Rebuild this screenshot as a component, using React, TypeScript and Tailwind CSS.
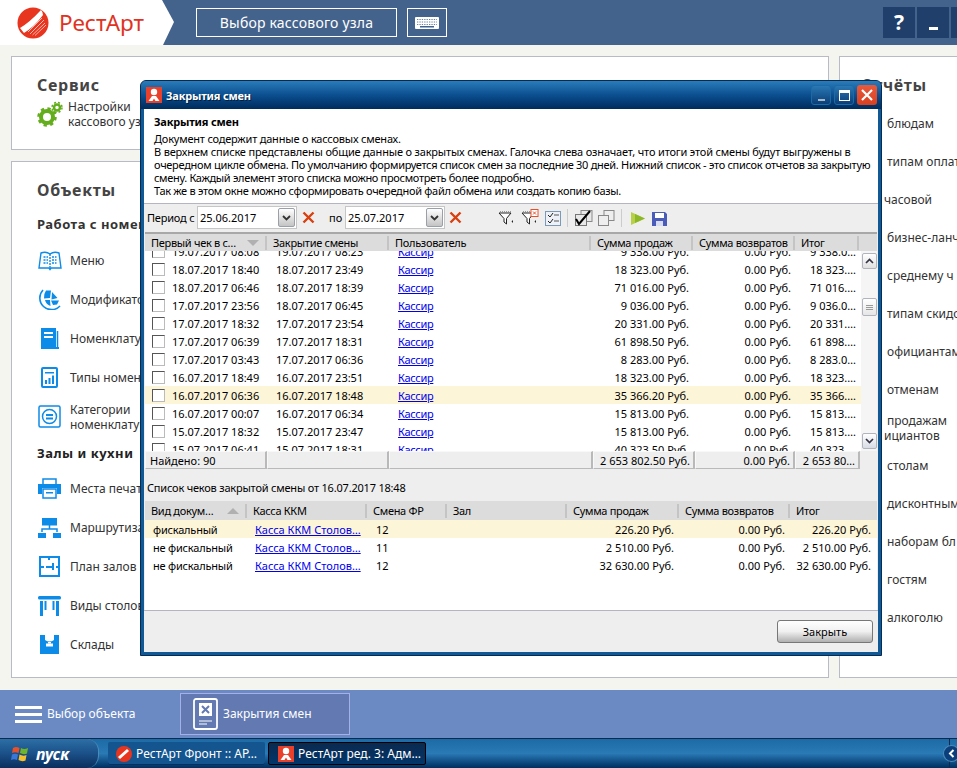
import React from "react";

const sans = "font-['Liberation_Sans',Arial,sans-serif]";
const win = "font-['Noto_Sans','DejaVu_Sans',sans-serif]";

const Logo = () => (
  <svg width="32" height="32" viewBox="0 0 32 32">
    <circle cx="16" cy="16" r="15.5" fill="#e8351f" />
    <path d="M3 21 Q13 15 24 3 Q26 5 26 8 Q17 20 7 26 Z" fill="#fff" />
    <path d="M13 27 L27 13 M15.500 28 L28 16 M18 28.500 L29 18 M11 25 L25 11" stroke="#f7b7ad" strokeWidth="1" />
  </svg>
);
const TitleIcon = ({ s = 16 }: { s?: number }) => (
  <svg width={s} height={s} viewBox="0 0 16 16" className="shrink-0">
    <rect width="16" height="16" fill="#e8402a" />
    <circle cx="8" cy="5" r="3.200" fill="#fff" />
    <path d="M2.500 14 L6 9 H10 L13.500 14 H9.500 L8 11.500 L6.500 14 Z" fill="#fff" />
  </svg>
);
const Gears = () => (
  <svg width="26" height="26" viewBox="0 0 26 26">
    <circle cx="10" cy="16" r="6" fill="none" stroke="#64ad1c" strokeWidth="4" />
    <circle cx="10" cy="16" r="8.500" fill="none" stroke="#64ad1c" strokeWidth="2.500" strokeDasharray="3.300 3.400" />
    <circle cx="20" cy="6.500" r="3" fill="none" stroke="#64ad1c" strokeWidth="2.500" />
    <circle cx="20" cy="6.500" r="5" fill="none" stroke="#64ad1c" strokeWidth="1.500" strokeDasharray="2 2" />
  </svg>
);

const B = "#0c8be8";
const icons: Record<string, React.ReactNode> = {
  menu: (
    <svg width="24" height="20" viewBox="0 0 24 20" fill="none" stroke={B} strokeWidth="1.400">
      <path d="M1 17 L3 2 Q8 0 12 3 Q16 0 21 2 L23 17 H13 L12 18.500 L11 17 Z" />
      <path d="M12 3 V17 M5.500 6 H10 M5.500 9 H10 M5.500 12 H10 M14 6 H18.500 M14 9 H18.500 M14 12 H18.500" strokeDasharray="2 1" />
    </svg>
  ),
  mod: (
    <svg width="22" height="21" viewBox="0 0 22 21" fill="none">
      <path d="M4 1 A10 10 0 0 0 21 17" stroke={B} strokeWidth="1.600" />
      <path d="M7 1.500 L12 1.500 L11 9 L5 9.500 Q4.500 5 7 1.500 Z M13 3 L18.500 9 L12.500 10.500 Z M12 11.500 H20 L18 15.500 L14 16 Z M6 11 L11 11 L11.500 17 Q7 15.500 6 11 Z" fill={B} />
    </svg>
  ),
  nom: (
    <svg width="18" height="21" viewBox="0 0 18 21">
      <rect x="0" y="0" width="15" height="19" fill={B} />
      <path d="M16.500 3 V20 H1" fill="none" stroke={B} strokeWidth="1.500" />
      <path d="M3 4 H12 V6 H3 Z M3 8 H12 V10 H3 Z" fill="#fff" />
      <rect x="0" y="19" width="18" height="2" fill={B} />
    </svg>
  ),
  types: (
    <svg width="17" height="21" viewBox="0 0 17 21" fill="none">
      <rect x="1" y="1" width="15" height="19" rx="1" stroke={B} strokeWidth="2" />
      <path d="M4 5 H13 V6.500 H4 Z M4 13 H6 V17 H4 Z M7.500 11 H9.500 V17 H7.500 Z M11 8.500 H13 V17 H11 Z" fill={B} />
    </svg>
  ),
  cat: (
    <svg width="23" height="23" viewBox="0 0 23 23" fill="none">
      <rect x="1" y="1" width="21" height="21" rx="1.500" stroke={B} strokeWidth="1.500" />
      <circle cx="11.500" cy="11.500" r="7" stroke={B} strokeWidth="1.500" />
      <path d="M8 9 H15 V11 H8 Z M8 12.500 H15 V14.500 H8 Z" fill={B} />
    </svg>
  ),
  print: (
    <svg width="23" height="21" viewBox="0 0 23 21">
      <path d="M5 6 V1 H18 V6" fill="none" stroke={B} strokeWidth="1.500" />
      <path d="M0 6 H23 V16 H19 V10 H4 V16 H0 Z" fill={B} />
      <rect x="5" y="11" width="13" height="9" fill="#fff" stroke={B} strokeWidth="1.500" />
      <rect x="8" y="14" width="7" height="1.500" fill={B} />
    </svg>
  ),
  route: (
    <svg width="23" height="20" viewBox="0 0 23 20">
      <rect x="4" y="0" width="15" height="7.500" fill={B} />
      <path d="M11.500 7 V11 M4 14 V11 H19 V14" fill="none" stroke={B} strokeWidth="1.500" />
      <rect x="0" y="15" width="8" height="5" fill={B} />
      <rect x="15" y="15" width="8" height="5" fill={B} />
    </svg>
  ),
  plan: (
    <svg width="21" height="21" viewBox="0 0 21 21" fill="none" stroke={B} strokeWidth="2">
      <path d="M1 1 H20 V20 H1 Z" />
      <path d="M1 11 H5 M7 11 H14 V7 M14 11 V14 M20 11 H17 M10 1 V4" />
    </svg>
  ),
  tables: (
    <svg width="23" height="20" viewBox="0 0 23 20">
      <rect x="0" y="0" width="23" height="3.500" rx="1.500" fill={B} />
      <rect x="2" y="5" width="3" height="15" fill={B} />
      <rect x="6.500" y="5" width="2" height="9" fill={B} />
      <rect x="14.500" y="5" width="2" height="9" fill={B} />
      <rect x="18" y="5" width="3" height="15" fill={B} />
    </svg>
  ),
  store: (
    <svg width="19" height="19" viewBox="0 0 19 19">
      <path d="M0 0 H5 V5 Q9.500 8 14 5 V0 H19 V19 H0 Z" fill={B} />
      <rect x="6" y="8.500" width="7" height="3" fill="#fff" />
      <rect x="8" y="7" width="3" height="1.500" fill="#fff" />
    </svg>
  ),
};

const SecTitle = ({ children, cls }: { children: React.ReactNode; cls: string }) => (
  <div className={`text-[13px] font-bold tracking-[0.5px] ${cls}`}>{children}</div>
);
const Item = ({ icon, label, label2 }: { icon: string; label: string; label2?: string }) => (
  <div className="flex h-[39px] items-center">
    <div className="flex w-[33px] shrink-0 justify-center pr-[8px]">{icons[icon]}</div>
    <div className="whitespace-nowrap text-[12px] leading-[15px] text-[#333]">
      {label}
      {label2 && <br />}
      {label2}
    </div>
  </div>
);

const rightItems = ["блюдам", "типам оплат", "часовой", "бизнес-ланч", "среднему ч", "типам скидо", "официантам", "отменам"];
const rightItems2 = ["столам", "дисконтным", "наборам бл", "гостям", "алкоголю"];

const rows = [
  ["19.07.2017 08:08", "19.07.2017 08:23", "9 338.00 Руб.", "9 338.0…"],
  ["18.07.2017 18:40", "18.07.2017 23:49", "18 323.00 Руб.", "18 323.…"],
  ["18.07.2017 06:46", "18.07.2017 18:39", "71 016.00 Руб.", "71 016.…"],
  ["17.07.2017 23:56", "18.07.2017 06:45", "9 036.00 Руб.", "9 036.0…"],
  ["17.07.2017 18:32", "17.07.2017 23:54", "20 331.00 Руб.", "20 331.…"],
  ["17.07.2017 06:39", "17.07.2017 18:31", "61 898.50 Руб.", "61 898.…"],
  ["17.07.2017 03:43", "17.07.2017 06:36", "8 283.00 Руб.", "8 283.0…"],
  ["16.07.2017 18:49", "16.07.2017 23:51", "18 323.00 Руб.", "18 323.…"],
  ["16.07.2017 06:36", "16.07.2017 18:48", "35 366.20 Руб.", "35 366.…"],
  ["16.07.2017 00:07", "16.07.2017 06:34", "15 813.00 Руб.", "15 813.…"],
  ["15.07.2017 18:32", "15.07.2017 23:47", "15 813.00 Руб.", "15 813.…"],
  ["15.07.2017 06:41", "15.07.2017 18:31", "40 323.50 Руб.", "40 323.…"],
];
const rows2 = [
  ["фискальный", "12", "226.20 Руб.", "226.20 Руб."],
  ["не фискальный", "11", "2 510.00 Руб.", "2 510.00 Руб."],
  ["не фискальный", "12", "32 630.00 Руб.", "32 630.00 Руб."],
];

const Head = ({ w, children, arrow, down }: { w: string; children?: React.ReactNode; arrow?: boolean; down?: boolean }) => (
  <div className={`flex h-[14px] items-center justify-between border-r-2 border-[#c4c4c4] pl-[6px] pr-[6px] ${w}`}>
    <span className="whitespace-nowrap">{children}</span>
    {arrow && (
      <svg width="12" height="6" viewBox="0 0 12 6">
        <path d={down ? "M0 0 H12 L6 6 Z" : "M0 6 H12 L6 0 Z"} fill="#b0b0b0" />
      </svg>
    )}
  </div>
);

const DateBox = ({ v }: { v: string }) => (
  <div className="flex h-[23px] w-[100px] items-center justify-between border border-[#c6c6c6] bg-white pl-[2px] pr-[1px]">
    <span className="text-[11px]">{v}</span>
    <div className="flex h-[19px] w-[17px] items-center justify-center rounded-[2px] border border-[#9aa0a8] bg-gradient-to-b from-[#ffffff] to-[#c4c4c4]">
      <svg width="9" height="6" viewBox="0 0 9 6">
        <path d="M1 1 L4.500 4.500 L8 1" fill="none" stroke="#333" strokeWidth="1.800" />
      </svg>
    </div>
  </div>
);
const RedX = ({ cls }: { cls: string }) => (
  <svg width="13" height="13" viewBox="0 0 13 13" className={cls}>
    <path d="M1.500 1.500 L11.500 11.500 M11.500 1.500 L1.500 11.500" stroke="#d8400f" strokeWidth="2.400" />
  </svg>
);
const Funnel = () => (
  <g>
    <path d="M0 2 H12 L7.500 7.500 V13 L5 11 V7.500 Z" fill="#fff" stroke="#222" strokeWidth="1" />
    <path d="M1 0.500 H12" stroke="#999" strokeDasharray="1 1" />
    <path d="M14 9 L12.500 10.500 L14 12 Z" fill="#222" />
  </g>
);

const Sunken = ({ w, children }: { w: string; children?: React.ReactNode }) => (
  <div className={`flex h-[18px] items-center justify-end whitespace-nowrap border-y border-r-2 border-l border-[#b9b9b9] border-l-[#f8f8f8] border-t-[#f8f8f8] pr-[3px] ${w}`}>
    {children}
  </div>
);

const Check = () => <div className="ml-[7px] h-[13px] w-[13px] shrink-0 border border-[#555] border-r-[#bbb] border-b-[#bbb] bg-white" />;

export default function App() {
  return (
    <div className={`relative flex h-[768px] w-[957px] flex-col overflow-hidden bg-[#f5f5ef] ${sans}`}>
      {/* шапка */}
      <header className="flex h-[45px] shrink-0 items-center bg-[#44638c]">
        <div className="flex h-full w-[174px] shrink-0 items-center gap-[10px] bg-white pl-[17px] [clip-path:polygon(0_0,162px_0,174px_22px,163px_45px,0_45px)]">
          <Logo />
          <span className="text-[22.500px] text-[#e0321e]">РестАрт</span>
        </div>
        <div className="ml-[22px] flex h-[29px] w-[201px] items-center justify-center border border-white text-[14px] tracking-[0.2px] text-white">
          Выбор кассового узла
        </div>
        <div className="ml-[10px] flex h-[29px] w-[40px] items-center justify-center border border-white">
          <svg width="24" height="12" viewBox="0 0 24 12">
            <rect width="24" height="12" rx="1" fill="#fff" />
            <path d="M2 2.500 H22 M2 5 H22 M2 7.500 H22" stroke="#44638c" strokeWidth="0.800" strokeDasharray="1.300 1.100" />
            <rect x="5" y="9" width="14" height="1.500" fill="#44638c" />
          </svg>
        </div>
        <div className="ml-auto flex gap-[2px]">
          <div className="flex h-[31px] w-[32px] items-center justify-center bg-[#203f6b] text-[21px] font-bold text-white">?</div>
          <div className="flex h-[31px] w-[32px] items-end justify-center bg-[#203f6b] pb-[8px]">
            <div className="h-[3px] w-[9px] bg-white" />
          </div>
          <div className="h-[31px] w-[6px] bg-[#203f6b]" />
        </div>
      </header>

      {/* рабочая область */}
      <main className="flex min-h-0 flex-1 gap-[10px] pb-[12px] pl-[11px] pt-[11px]">
        <div className="flex w-[818px] shrink-0 flex-col gap-[11px]">
          <section className="h-[94px] border border-[#b8bac8] bg-white pl-[25px] pt-[19px]">
            <div className="text-[16px] font-bold leading-[18px] tracking-[0.7px] text-[#444]">Сервис</div>
            <div className="mt-[5px] flex items-center gap-[5px]">
              <Gears />
              <div className="whitespace-nowrap text-[12px] leading-[15px] text-[#333]">
                Настройки
                <br />
                кассового узла
              </div>
            </div>
          </section>
          <section className="flex-1 border border-[#b8bac8] bg-white pl-[25px] pt-[19px]">
            <div className="text-[16px] font-bold leading-[18px] tracking-[0.7px] text-[#444]">Объекты</div>
            <SecTitle cls="mt-[18px] leading-[15px] text-[#333]">Работа с номенклатурой</SecTitle>
            <div className="mt-[9px]">
              <Item icon="menu" label="Меню" />
              <Item icon="mod" label="Модификаторы" />
              <Item icon="nom" label="Номенклатура" />
              <Item icon="types" label="Типы номенклатуры" />
              <Item icon="cat" label="Категории" label2="номенклатуры" />
            </div>
            <SecTitle cls="mt-[10px] leading-[15px] text-[#222]">Залы и кухни</SecTitle>
            <div className="mt-[8px]">
              <Item icon="print" label="Места печати" />
              <Item icon="route" label="Маршрутизация" />
              <Item icon="plan" label="План залов" />
              <Item icon="tables" label="Виды столов" />
              <Item icon="store" label="Склады" />
            </div>
          </section>
        </div>
        <section className="min-w-0 flex-1 overflow-hidden border border-r-0 border-[#b8bac8] bg-white pt-[19px]">
          <div className="pl-[21px] text-[16px] font-bold leading-[18px] tracking-[0.7px] text-[#444]">Отчёты</div>
          <div className="mt-[11px] pl-[47px] text-[12px] text-[#333]">
            {rightItems.map((t) => (
              <div key={t} className={`flex h-[38px] items-center whitespace-nowrap ${t === "часовой" ? "-ml-[3px]" : ""}`}>
                {t}
              </div>
            ))}
            <div className="flex h-[38px] flex-col justify-center whitespace-nowrap leading-[15px]">
              <span>продажам</span>
              <span className="-ml-[3px]">ициантов</span>
            </div>
            {rightItems2.map((t) => (
              <div key={t} className="flex h-[38px] items-center whitespace-nowrap">
                {t}
              </div>
            ))}
          </div>
        </section>
      </main>

      {/* панель открытых окон */}
      <div className="flex h-[48px] shrink-0 items-center bg-[#6b8ac4] text-white">
        <div className="ml-[15px] flex w-[27px] flex-col gap-[4px]">
          <div className="h-[3px] bg-white" />
          <div className="h-[3px] bg-white" />
          <div className="h-[3px] bg-white" />
        </div>
        <span className="ml-[5px] w-[88px] whitespace-nowrap text-[12px]">Выбор объекта</span>
        <div className="ml-[45px] flex h-[42px] w-[170px] items-center border border-[#a5b0ea] bg-[#6279b2] pl-[12px]">
          <svg width="25" height="32" viewBox="0 0 25 32">
            <rect x="1" y="1" width="23" height="30" rx="2" fill="none" stroke="#fff" strokeWidth="1.800" />
            <rect x="6" y="5" width="13" height="13" fill="#fff" />
            <path d="M9 8 L16 15 M16 8 L9 15" stroke="#6279b2" strokeWidth="2" />
            <path d="M6 23 H19 M6 26 H14" stroke="#fff" strokeWidth="1" />
          </svg>
          <span className="ml-[5px] whitespace-nowrap text-[12px]">Закрытия смен</span>
        </div>
      </div>

      {/* панель задач */}
      <footer className={`flex h-[30px] shrink-0 items-center border-t border-[#0c2a4e] bg-gradient-to-b from-[#1c6aa6] via-[#2a7ab6] to-[#002f60] text-[12px] text-white ${win}`}>
        <div className="flex h-full w-[99px] items-center rounded-r-[12px] border-r border-[#4c8ab8] bg-gradient-to-b from-[#2b6fa6] via-[#1b5088] to-[#0a2f5e] pl-[11px]">
          <svg width="19" height="18" viewBox="0 0 19 18">
            <path d="M2 3 Q5 1 8.500 3 L7.500 8 Q4 6.500 1 8 Z" fill="#e8502a" />
            <path d="M10 3 Q13 5 17 3 L16 8.500 Q12.500 10 9 8 Z" fill="#6fb52c" />
            <path d="M1 9.500 Q4 8 7 9.500 L6 15 Q3 13.500 0 15 Z" fill="#3a78d8" />
            <path d="M8.500 9.500 Q12 11.500 15.500 10 L14.500 15.500 Q11 17 7.500 15 Z" fill="#f4c02c" />
          </svg>
          <span className={`ml-[6px] text-[16px] font-bold italic ${sans}`}>пуск</span>
        </div>
        <div className="ml-[9px] flex h-[23px] w-[157px] items-center gap-[4px] rounded-[2px] bg-[#14558f] pl-[8px] shadow-[inset_0_-1px_0_#0a2f5e]">
          <svg width="16" height="16" viewBox="0 0 16 16" className="shrink-0">
            <circle cx="8" cy="8" r="8" fill="#e8351f" />
            <path d="M2 11 L11 3 L13 5 L4 13 Z" fill="#fff" />
          </svg>
          <span className="whitespace-nowrap">РестАрт Фронт :: АР…</span>
        </div>
        <div className="ml-[3px] flex h-[23px] w-[158px] items-center gap-[4px] rounded-[2px] border border-black bg-gradient-to-b from-[#0a2a50] to-[#02356a] pl-[9px]">
          <TitleIcon />
          <span className="whitespace-nowrap">РестАрт ред. 3: Адм…</span>
        </div>
        <div className="ml-auto flex h-full w-[8px] items-center border-l border-[#0c2a4e]">
          <div className="-ml-[6px] flex h-[15px] w-[15px] shrink-0 items-center justify-center rounded-full bg-[#0a3f7c] ring-1 ring-[#4c8ab8]">
            <svg width="7" height="9" viewBox="0 0 7 9">
              <path d="M5.500 1 L2 4.500 L5.500 8" fill="none" stroke="#fff" strokeWidth="2" />
            </svg>
          </div>
        </div>
      </footer>

      {/* окно поверх страницы */}
      <div className={`absolute left-[140px] top-[80px] flex h-[576px] w-[742px] flex-col rounded-t-[6px] border border-[#0a2a50] bg-[#0f5a96] px-[3px] pb-[3px] text-[11px] leading-[13px] text-black ${win}`}>
        <div className="-mx-[3px] flex h-[28px] shrink-0 items-center rounded-t-[5px] bg-gradient-to-b from-[#2a7cba] via-[#0c4f90] to-[#002c5c] pl-[5px] pr-[4px]">
          <TitleIcon />
          <span className="ml-[4px] text-[11px] font-bold tracking-[-0.2px] text-white [text-shadow:1px_1px_0_#002040]">Закрытия смен</span>
          <div className="ml-auto flex gap-[3px]">
            <div className="flex h-[20px] w-[20px] items-end justify-center rounded-[3px] border border-[#1c6aa6] bg-gradient-to-b from-[#2a78b4] to-[#0a3f78] pb-[3px]">
              <div className="h-[2px] w-[7px] bg-[#a8b8c8]" />
            </div>
            <div className="flex h-[20px] w-[20px] items-center justify-center rounded-[3px] border border-[#1c6aa6] bg-gradient-to-b from-[#2a78b4] to-[#0a3f78]">
              <div className="h-[11px] w-[11px] border border-t-[3px] border-white" />
            </div>
            <div className="flex h-[20px] w-[20px] items-center justify-center rounded-[3px] bg-gradient-to-b from-[#e8593c] to-[#d8401f]">
              <svg width="12" height="12" viewBox="0 0 12 12">
                <path d="M1 1 L11 11 M11 1 L1 11" stroke="#fff" strokeWidth="2.200" />
              </svg>
            </div>
          </div>
        </div>

        <div className="flex min-h-0 flex-1 flex-col bg-[#eeeeee]">
          {/* описание */}
          <div className="h-[95px] shrink-0 whitespace-nowrap border-b border-[#b4b4c4] bg-white pl-[10px] pt-[6px] tracking-[-0.2px]">
            <div className="font-bold">Закрытия смен</div>
            <div className="mt-[4px]">Документ содержит данные о кассовых сменах.</div>
            <div className="tracking-[-0.175px]">В верхнем списке представлены общие данные о закрытых сменах. Галочка слева означает, что итоги этой смены будут выгружены в</div>
            <div className="tracking-[-0.29px]">очередном цикле обмена. По умолчанию формируется список смен за последние 30 дней. Нижний список - это список отчетов за закрытую</div>
            <div className="tracking-[-0.32px]">смену. Каждый элемент этого списка можно просмотреть более подробно.</div>
            <div className="tracking-[-0.3px]">Так же в этом окне можно сформировать очередной файл обмена или создать копию базы.</div>
          </div>

          {/* панель инструментов */}
          <div className="flex h-[27px] shrink-0 items-center pl-[3px]">
            <span className="w-[50px] whitespace-nowrap tracking-[-0.2px]">Период с</span>
            <DateBox v="25.06.2017" />
            <RedX cls="ml-[5px]" />
            <span className="ml-[14px] w-[16px]">по</span>
            <DateBox v="25.07.2017" />
            <RedX cls="ml-[4px]" />
            <svg width="172" height="18" viewBox="0 0 172 18" className="ml-[36px]">
              <g transform="translate(1,2)"><Funnel /></g>
              <g transform="translate(24,2)"><Funnel /></g>
              <rect x="33" y="0.500" width="7" height="7" fill="#fff" stroke="#e8502a" />
              <path d="M35 2.500 L38 5.500 M38 2.500 L35 5.500" stroke="#e8502a" />
              <rect x="47.500" y="2.500" width="15" height="14" fill="#eef2f8" stroke="#7c9ab8" />
              <path d="M50 6 L52 8 L55 4 M50 12 L52 14 L55 10" fill="none" stroke="#222" />
              <path d="M56 6 H61 M56 12 H61" stroke="#555" />
              <path d="M69.500 0 V18" stroke="#ccc" />
              <rect x="83" y="1.500" width="11" height="11" fill="#e8e8e8" stroke="#888" />
              <rect x="77.500" y="5.500" width="11" height="11" fill="#e8e8e8" stroke="#777" />
              <path d="M78 10 L81 15 L92 2" fill="none" stroke="#000" strokeWidth="2" />
              <rect x="106" y="1.500" width="10" height="10" fill="#eee" stroke="#888" />
              <rect x="100.500" y="6.500" width="10" height="10" fill="#eee" stroke="#888" />
              <path d="M123.500 0 V18" stroke="#ccc" />
              <path d="M133 3 L147 9.500 L133 16 Z" fill="#b8d048" />
              <path d="M137 5 L147 9.500 L137 14 Z" fill="#8cb828" />
              <path d="M154 3 H167 L169 5 V17 H154 Z" fill="#4a5cb8" />
              <rect x="157" y="4" width="9" height="5" fill="#fff" />
              <rect x="158" y="12" width="7" height="5" fill="#d8dcf0" />
            </svg>
          </div>

          {/* верхний список */}
          <div className="mx-[1px] mt-[1px] flex h-[19px] shrink-0 items-center border-t-2 border-[#a8a8a8] bg-[#dcdcdc] tracking-[-0.3px]">
            <Head w="w-[122px]" arrow down>Первый чек в с…</Head>
            <Head w="w-[122px]">Закрытие смены</Head>
            <Head w="w-[202px]">Пользователь</Head>
            <Head w="w-[102px]">Сумма продаж</Head>
            <Head w="w-[102px]">Сумма возвратов</Head>
            <Head w="w-[64px]">Итог</Head>
          </div>
          <div className="mx-[1px] flex h-[200px] shrink-0 overflow-hidden bg-white">
            <div className="min-w-0 flex-1">
              <div className="-mt-[9px]">
                {rows.map((r, i) => (
                  <div key={i} className={`flex h-[18px] items-center whitespace-nowrap ${i === 8 ? "bg-[#fdf5d8]" : ""}`}>
                    <Check />
                    <span className="ml-[7px] w-[104px]">{r[0]}</span>
                    <span className="w-[122px]">{r[1]}</span>
                    <span className="w-[193px] tracking-[-0.3px] text-[#0000ee] underline">Кассир</span>
                    <span className="w-[98px] text-right">{r[2]}</span>
                    <span className="w-[102px] text-right">0.00 Руб.</span>
                    <span className="w-[65px] text-right">{r[3]}</span>
                  </div>
                ))}
              </div>
            </div>
            <div className="flex w-[16px] shrink-0 flex-col items-center bg-[#f5f5f5] py-[2px]">
              <div className="flex h-[16px] w-[15px] items-center justify-center rounded-[2px] border border-[#b0b4bc] bg-gradient-to-b from-white to-[#e0e0e0]">
                <svg width="9" height="6" viewBox="0 0 9 6"><path d="M1 5 L4.500 1.500 L8 5" fill="none" stroke="#334" strokeWidth="1.700" /></svg>
              </div>
              <div className="mt-[29px] flex h-[18px] w-[15px] flex-col items-center justify-center gap-[1px] rounded-[2px] border border-[#b0b4bc] bg-gradient-to-b from-white to-[#e6e6e6]">
                <div className="h-px w-[7px] bg-[#999]" />
                <div className="h-px w-[7px] bg-[#999]" />
                <div className="h-px w-[7px] bg-[#999]" />
              </div>
              <div className="mt-auto flex h-[16px] w-[15px] items-center justify-center rounded-[2px] border border-[#b0b4bc] bg-gradient-to-b from-white to-[#d8dce4]">
                <svg width="9" height="6" viewBox="0 0 9 6"><path d="M1 1 L4.500 4.500 L8 1" fill="none" stroke="#334" strokeWidth="1.700" /></svg>
              </div>
            </div>
          </div>
          <div className="mx-[1px] flex h-[19px] shrink-0 bg-[#eeeeee]">
            <Sunken w="w-[122px] !justify-start pl-[4px]">Найдено: 90</Sunken>
            <Sunken w="w-[122px]" />
            <Sunken w="w-[204px]" />
            <Sunken w="w-[102px]">2 653 802.50 Руб.</Sunken>
            <Sunken w="w-[100px]">0.00 Руб.</Sunken>
            <Sunken w="w-[65px]">2 653 80…</Sunken>
          </div>

          <div className="mt-[11px] shrink-0 whitespace-nowrap pl-[3px] leading-[13px] tracking-[-0.2px]">Список чеков закрытой смены от 16.07.2017 18:48</div>

          {/* нижний список */}
          <div className="mx-[1px] mt-[7px] flex min-h-0 flex-1 flex-col bg-white">
            <div className="flex h-[19px] shrink-0 items-center bg-[#dcdcdc] tracking-[-0.3px]">
              <Head w="w-[102px]" arrow>Вид докум…</Head>
              <Head w="w-[120px]">Касса ККМ</Head>
              <Head w="w-[80px]">Смена ФР</Head>
              <Head w="w-[120px]">Зал</Head>
              <Head w="w-[112px]">Сумма продаж</Head>
              <Head w="w-[111px]">Сумма возвратов</Head>
              <div className="pl-[6px]">Итог</div>
            </div>
            {rows2.map((r, i) => (
              <div key={i} className={`flex h-[18px] shrink-0 items-center whitespace-nowrap ${i === 0 ? "bg-[#fdf5d8]" : ""}`}>
                <span className="ml-[8px] w-[102px] tracking-[-0.2px]">{r[0]}</span>
                <span className="w-[121px] text-[#0000ee] underline">Касса ККМ Столов…</span>
                <span className="w-[197px]">{r[1]}</span>
                <span className="w-[101px] text-right">{r[2]}</span>
                <span className="w-[111px] text-right">0.00 Руб.</span>
                <span className="w-[86px] text-right">{r[3]}</span>
              </div>
            ))}
          </div>

          {/* кнопка */}
          <div className="flex h-[42px] shrink-0 items-start justify-end border-t border-[#b4b4c4] pr-[5px] pt-[9px]">
            <div className="flex h-[23px] w-[96px] items-center justify-center rounded-[3px] border border-[#777] bg-gradient-to-b from-white via-[#f0f0f0] to-[#b0b0b0]">
              Закрыть
            </div>
          </div>
        </div>
      </div>
    </div>
  );
}
